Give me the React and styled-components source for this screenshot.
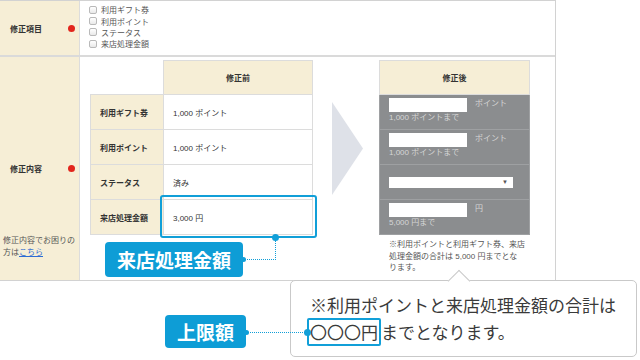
import styled, { createGlobalStyle } from "styled-components"

// Global

const GlobalStyle = createGlobalStyle`
  body {
    margin: 0;
    background: #fff;
    font-family: "Liberation Sans", "Noto Sans CJK JP", sans-serif;
    color: #333;
  }
`

const Page = styled.div`
  width: 640px;
  height: 360px;
  overflow: hidden;
`

// Form table

const FormTable = styled.div`
  width: 556px;
  box-sizing: border-box;
  border-top: 1px solid #d2d2d2;
  border-right: 1px solid #d2d2d2;
  border-bottom: 1px solid #d2d2d2;
`
const Row = styled.div`
  display: flex;
  box-sizing: border-box;
  height: ${(p) => p.h}px;
  border-top: ${(p) => (p.divider ? "2px solid #dadada" : "none")};
`
const LabelCell = styled.div`
  width: 80px;
  flex-shrink: 0;
  box-sizing: border-box;
  background: #f6eed6;
  border-right: 1px solid #dcdcdc;
  font-size: 8px;
`
const SimpleLabel = styled(LabelCell)`
  display: flex;
  align-items: center;
  justify-content: space-between;
  padding: 0 4px 0 10px;
`
const TallLabel = styled(LabelCell)`
  display: grid;
  grid-template-rows: 1fr auto 1fr;
`
const LabelLine = styled.div`
  display: flex;
  align-items: center;
  justify-content: space-between;
  padding: 0 4px 0 10px;
`
const LabelText = styled.span`
  font-weight: 700;
  color: #333;
`
const Required = styled.span`
  width: 7px;
  height: 7px;
  border-radius: 50%;
  background: #e2251c;
`
const HelpText = styled.div`
  align-self: end;
  padding: 0 0 21px 3px;
  line-height: 12px;
  color: #555;
  a {
    color: #2d6bd3;
    text-decoration: underline;
  }
`

// Row 1: checkboxes

const CheckList = styled.div`
  display: flex;
  flex-direction: column;
  padding: 3px 0 0 9px;
`
const CheckItem = styled.label`
  display: flex;
  align-items: center;
  gap: 4px;
  height: 11.4px;
  font-size: 8px;
  color: #555;
`
const CheckBox = styled.span`
  width: 8px;
  height: 8px;
  box-sizing: border-box;
  border: 1px solid #b9b9b9;
  border-radius: 2px;
  background: linear-gradient(#fff, #e9e9e9);
`

// Row 2: before / after

const Content = styled.div`
  display: flex;
  align-items: flex-start;
  padding: 3px 0 0 10px;
`
const Column = styled.div`
  display: flex;
  flex-direction: column;
`
const Grid = styled.div`
  display: grid;
  grid-template-columns: ${(p) => p.cols};
  grid-template-rows: 33px repeat(4, 34px);
  gap: 1px;
  padding: 1px;
`
const Cell = styled.div`
  position: relative;
  display: flex;
  align-items: center;
  font-size: 8px;
  box-shadow: ${(p) => (p.empty ? "none" : `0 0 0 1px ${p.line || "#dcdcdc"}`)};
  background: ${(p) => p.bg || "#fff"};
  justify-content: ${(p) => (p.center ? "center" : "flex-start")};
  padding-left: ${(p) => (p.center ? 0 : 9)}px;
  font-weight: ${(p) => (p.bold ? 700 : 400)};
  color: #333;
  grid-column: ${(p) => p.col || "auto"};
`
const Highlight = styled.div`
  position: absolute;
  left: -4px;
  right: -5px;
  top: -5px;
  bottom: -4px;
  border: 2px solid #119fd8;
  border-radius: 3px;
`
const Tag = styled.div`
  position: relative;
  height: ${(p) => p.h}px;
  line-height: ${(p) => p.h}px;
  padding: 0 12px;
  background: #0e9dd6;
  border-radius: 4px;
  color: #fff;
  font-family: "Noto Sans CJK JP", sans-serif;
  font-weight: 700;
  font-size: 19px;
  white-space: nowrap;
`
const BeforeTag = styled(Tag)`
  align-self: flex-start;
  margin: 7px 0 0 15px;
`
const ElbowLine = styled.span`
  position: absolute;
  left: 100%;
  bottom: 50%;
  width: 32px;
  height: 22px;
  border-right: 1px dotted #119fd8;
  border-bottom: 1px dotted #119fd8;
  &::before {
    content: "";
    position: absolute;
    left: -2px;
    bottom: -3px;
    width: 5px;
    height: 5px;
    border-radius: 50%;
    background: #119fd8;
  }
  &::after {
    content: "";
    position: absolute;
    right: -4px;
    top: -3px;
    width: 7px;
    height: 7px;
    border-radius: 50%;
    background: #119fd8;
  }
`
const Arrow = styled.svg`
  flex-shrink: 0;
  margin: 42px 16px 0 19px;
`

const AfterCell = styled.div`
  display: flex;
  flex-direction: column;
  justify-content: ${(p) => (p.middle ? "center" : "flex-start")};
  padding: ${(p) => (p.middle ? "0 0 0 9px" : "3px 0 0 9px")};
  background: #8b8d8f;
  box-shadow: 0 0 0 1px #9ea0a2;
  font-size: 8px;
  color: #d6d6d6;
`
const InputLine = styled.div`
  display: flex;
  align-items: flex-start;
  gap: 8px;
  line-height: 12px;
`
const TextBox = styled.span`
  width: 78px;
  height: 14px;
  background: #fff;
`
const Limit = styled.span`
  line-height: 12px;
`
const SelectBox = styled.span`
  display: flex;
  align-items: center;
  justify-content: flex-end;
  width: 124px;
  height: 11px;
  padding-right: 5px;
  box-sizing: border-box;
  background: #fff;
  color: #555;
  font-size: 6px;
`
const Note = styled.p`
  margin: 4px 0 0 10px;
  font-size: 8px;
  line-height: 11.5px;
  color: #555;
`

// Bottom callout

const BottomRow = styled.div`
  display: flex;
  margin-top: -1px;
  padding-left: 165px;
`
const LimitTag = styled(Tag)`
  align-self: flex-end;
  margin: 0 44px 9px 0;
`
const Callout = styled.div`
  position: relative;
  width: 347px;
  box-sizing: border-box;
  padding: 10px 10px 10px 19px;
  background: #fff;
  border: 1px solid #c9c9c9;
  border-radius: 5px;
  font-family: "Noto Sans CJK JP", sans-serif;
  font-size: 17px;
  line-height: 27px;
  color: #3a3a3a;
  &::before {
    content: "";
    position: absolute;
    top: -8px;
    left: 160px;
    width: 15px;
    height: 15px;
    background: #fff;
    border-top: 1px solid #c9c9c9;
    border-left: 1px solid #c9c9c9;
    transform: rotate(45deg);
  }
`
const Marked = styled.span`
  position: relative;
  display: inline-block;
  margin-left: -3px;
  padding: 0 1px;
  line-height: 24px;
  border: 2px solid #119fd8;
  border-radius: 2px;
`
const StraightLine = styled.span`
  position: absolute;
  right: calc(100% + 2px);
  top: 50%;
  width: 61px;
  border-top: 1px dotted #119fd8;
  &::before {
    content: "";
    position: absolute;
    left: -2px;
    top: -3px;
    width: 5px;
    height: 5px;
    border-radius: 50%;
    background: #119fd8;
  }
  &::after {
    content: "";
    position: absolute;
    right: -4px;
    top: -4px;
    width: 7px;
    height: 7px;
    border-radius: 50%;
    background: #119fd8;
  }
`

const beforeRows = [
  { label: "利用ギフト券", value: "1,000 ポイント" },
  { label: "利用ポイント", value: "1,000 ポイント" },
  { label: "ステータス", value: "済み" },
  { label: "来店処理金額", value: "3,000 円", mark: true },
]

const checks = ["利用ギフト券", "利用ポイント", "ステータス", "来店処理金額"]

const App = () => {
  return (
    <Page>
      <GlobalStyle />
      <FormTable>
        <Row h={54}>
          <SimpleLabel>
            <LabelText>修正項目</LabelText>
            <Required />
          </SimpleLabel>
          <CheckList>
            {checks.map((c) => (
              <CheckItem key={c}>
                <CheckBox />
                {c}
              </CheckItem>
            ))}
          </CheckList>
        </Row>

        <Row h={225} divider>
          <TallLabel>
            <div />
            <LabelLine>
              <LabelText>修正内容</LabelText>
              <Required />
            </LabelLine>
            <HelpText>
              修正内容でお困りの
              <br />
              方は<a href="#">こちら</a>
            </HelpText>
          </TallLabel>

          <Content>
            <Column>
              <Grid cols="72px 148px">
                <Cell empty />
                <Cell center bold bg="#f6eed6">修正前</Cell>
                {beforeRows.map((r) => [
                  <Cell key={r.label + "l"} bold bg="#f6eed6">{r.label}</Cell>,
                  <Cell key={r.label + "v"}>
                    {r.value}
                    {r.mark && <Highlight />}
                  </Cell>,
                ])}
              </Grid>
              <BeforeTag h={35}>
                来店処理金額
                <ElbowLine />
              </BeforeTag>
            </Column>

            <Arrow width="31" height="93" viewBox="0 0 31 93">
              <polygon points="0,0 31,46.5 0,93" fill="#dee1e8" />
            </Arrow>

            <Column>
              <Grid cols="149px">
                <Cell center bold bg="#f6eed6">修正後</Cell>
                <AfterCell>
                  <InputLine>
                    <TextBox />
                    ポイント
                  </InputLine>
                  <Limit>1,000 ポイントまで</Limit>
                </AfterCell>
                <AfterCell>
                  <InputLine>
                    <TextBox />
                    ポイント
                  </InputLine>
                  <Limit>1,000 ポイントまで</Limit>
                </AfterCell>
                <AfterCell middle>
                  <SelectBox>▼</SelectBox>
                </AfterCell>
                <AfterCell>
                  <InputLine>
                    <TextBox />
                    円
                  </InputLine>
                  <Limit>5,000 円まで</Limit>
                </AfterCell>
              </Grid>
              <Note>
                ※利用ポイントと利用ギフト券、来店
                <br />
                処理金額の合計は 5,000 円までとな
                <br />
                ります。
              </Note>
            </Column>
          </Content>
        </Row>
      </FormTable>

      <BottomRow>
        <LimitTag h={33}>上限額</LimitTag>
        <Callout>
          ※利用ポイントと来店処理金額の合計は
          <br />
          <Marked>
            〇〇〇円
            <StraightLine />
          </Marked>
          までとなります。
        </Callout>
      </BottomRow>
    </Page>
  )
}

export default App
